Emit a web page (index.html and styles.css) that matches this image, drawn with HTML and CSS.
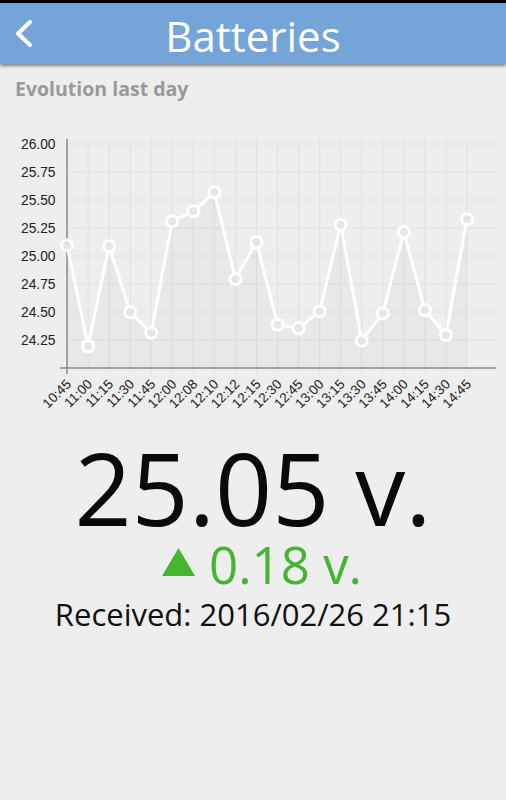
FILE: index.html
```html
<!DOCTYPE html>
<html>
<head>
<meta charset="utf-8">
<link rel="stylesheet" href="styles.css">
</head>
<body>
<header class="topbar">
  <div class="back">
    <svg width="20" height="32" viewBox="0 0 20 32"><polyline points="15,3 3,14.5 15,26" fill="none" stroke="#fff" stroke-width="4" stroke-linecap="round" stroke-linejoin="round"/></svg>
  </div>
  <h1 class="title">Batteries</h1>
  <div></div>
</header>
<h2 class="subtitle">Evolution last day</h2>
<svg class="chart" width="506" height="319" viewBox="0 101 506 319">
  <g class="grid" stroke="#e0e0e0" stroke-width="1">
    <line x1="67" y1="144" x2="496" y2="144"/>
    <line x1="67" y1="172" x2="496" y2="172"/>
    <line x1="67" y1="200" x2="496" y2="200"/>
    <line x1="67" y1="228" x2="496" y2="228"/>
    <line x1="67" y1="256" x2="496" y2="256"/>
    <line x1="67" y1="284" x2="496" y2="284"/>
    <line x1="67" y1="312" x2="496" y2="312"/>
    <line x1="67" y1="340" x2="496" y2="340"/>
    <line x1="88.05" y1="139" x2="88.05" y2="373"/>
    <line x1="109.11" y1="139" x2="109.11" y2="373"/>
    <line x1="130.16" y1="139" x2="130.16" y2="373"/>
    <line x1="151.21" y1="139" x2="151.21" y2="373"/>
    <line x1="172.26" y1="139" x2="172.26" y2="373"/>
    <line x1="193.32" y1="139" x2="193.32" y2="373"/>
    <line x1="214.37" y1="139" x2="214.37" y2="373"/>
    <line x1="235.42" y1="139" x2="235.42" y2="373"/>
    <line x1="256.47" y1="139" x2="256.47" y2="373"/>
    <line x1="277.53" y1="139" x2="277.53" y2="373"/>
    <line x1="298.58" y1="139" x2="298.58" y2="373"/>
    <line x1="319.63" y1="139" x2="319.63" y2="373"/>
    <line x1="340.68" y1="139" x2="340.68" y2="373"/>
    <line x1="361.74" y1="139" x2="361.74" y2="373"/>
    <line x1="382.79" y1="139" x2="382.79" y2="373"/>
    <line x1="403.84" y1="139" x2="403.84" y2="373"/>
    <line x1="424.89" y1="139" x2="424.89" y2="373"/>
    <line x1="445.95" y1="139" x2="445.95" y2="373"/>
    <line x1="467" y1="139" x2="467" y2="373"/>
  </g>
  <polygon fill="rgba(0,0,0,0.025)" points="67,368 67,245.3 88.05,346.3 109.11,246.3 130.16,312.3 151.21,332.7 172.26,221.3 193.32,211.3 214.37,192.3 235.42,279 256.47,242 277.53,324.7 298.58,328.3 319.63,311.3 340.68,225 361.74,340.7 382.79,313.3 403.84,232 424.89,310.3 445.95,335 467,219.3 467,368"/>
  <g stroke="#888" stroke-width="1.5">
    <line x1="60" y1="368" x2="496" y2="368"/>
    <line x1="67" y1="139" x2="67" y2="374"/>
  </g>
  <polyline fill="none" stroke="#fff" stroke-width="3" stroke-linejoin="round" points="67,245.3 88.05,346.3 109.11,246.3 130.16,312.3 151.21,332.7 172.26,221.3 193.32,211.3 214.37,192.3 235.42,279 256.47,242 277.53,324.7 298.58,328.3 319.63,311.3 340.68,225 361.74,340.7 382.79,313.3 403.84,232 424.89,310.3 445.95,335 467,219.3"/>
  <g fill="rgba(228,228,228,0.9)" stroke="#fff" stroke-width="3">
    <circle cx="67" cy="245.3" r="5.5"/>
    <circle cx="88.05" cy="346.3" r="5.5"/>
    <circle cx="109.11" cy="246.3" r="5.5"/>
    <circle cx="130.16" cy="312.3" r="5.5"/>
    <circle cx="151.21" cy="332.7" r="5.5"/>
    <circle cx="172.26" cy="221.3" r="5.5"/>
    <circle cx="193.32" cy="211.3" r="5.5"/>
    <circle cx="214.37" cy="192.3" r="5.5"/>
    <circle cx="235.42" cy="279" r="5.5"/>
    <circle cx="256.47" cy="242" r="5.5"/>
    <circle cx="277.53" cy="324.7" r="5.5"/>
    <circle cx="298.58" cy="328.3" r="5.5"/>
    <circle cx="319.63" cy="311.3" r="5.5"/>
    <circle cx="340.68" cy="225" r="5.5"/>
    <circle cx="361.74" cy="340.7" r="5.5"/>
    <circle cx="382.79" cy="313.3" r="5.5"/>
    <circle cx="403.84" cy="232" r="5.5"/>
    <circle cx="424.89" cy="310.3" r="5.5"/>
    <circle cx="445.95" cy="335" r="5.5"/>
    <circle cx="467" cy="219.3" r="5.5"/>
  </g>
  <g class="ylabels" text-anchor="end">
    <text x="55.5" y="149">26.00</text>
    <text x="55.5" y="177">25.75</text>
    <text x="55.5" y="205">25.50</text>
    <text x="55.5" y="233">25.25</text>
    <text x="55.5" y="261">25.00</text>
    <text x="55.5" y="289">24.75</text>
    <text x="55.5" y="317">24.50</text>
    <text x="55.5" y="345">24.25</text>
  </g>
  <g class="xlabels" text-anchor="end">
    <text transform="translate(72,385) rotate(-45)">10:45</text>
    <text transform="translate(93.05,385) rotate(-45)">11:00</text>
    <text transform="translate(114.11,385) rotate(-45)">11:15</text>
    <text transform="translate(135.16,385) rotate(-45)">11:30</text>
    <text transform="translate(156.21,385) rotate(-45)">11:45</text>
    <text transform="translate(177.26,385) rotate(-45)">12:00</text>
    <text transform="translate(198.32,385) rotate(-45)">12:08</text>
    <text transform="translate(219.37,385) rotate(-45)">12:10</text>
    <text transform="translate(240.42,385) rotate(-45)">12:12</text>
    <text transform="translate(261.47,385) rotate(-45)">12:15</text>
    <text transform="translate(282.53,385) rotate(-45)">12:30</text>
    <text transform="translate(303.58,385) rotate(-45)">12:45</text>
    <text transform="translate(324.63,385) rotate(-45)">13:00</text>
    <text transform="translate(345.68,385) rotate(-45)">13:15</text>
    <text transform="translate(366.74,385) rotate(-45)">13:30</text>
    <text transform="translate(387.79,385) rotate(-45)">13:45</text>
    <text transform="translate(408.84,385) rotate(-45)">14:00</text>
    <text transform="translate(429.89,385) rotate(-45)">14:15</text>
    <text transform="translate(450.95,385) rotate(-45)">14:30</text>
    <text transform="translate(472,385) rotate(-45)">14:45</text>
  </g>
</svg>
<section class="reading">
  <div class="value">25.05 v.</div>
  <div class="delta"><svg class="arrow" width="33" height="28" viewBox="0 0 33 28"><polygon points="16.5,0 33,28 0,28" fill="#44b52f"/></svg><span>0.18 v.</span></div>
  <div class="received">Received: 2016/02/26 21:15</div>
</section>
</body>
</html>
```
FILE: styles.css
```css
html, body {
  margin: 0;
  padding: 0;
  background: #eeeeee;
  font-family: "Open Sans", "Noto Sans", sans-serif;
}
.topbar {
  border-top: 3px solid #000;
  height: 61px;
  background: #74a4d8;
  box-shadow: 0 2px 3px rgba(0, 0, 0, 0.45);
  display: grid;
  grid-template-columns: 1fr auto 1fr;
  align-items: center;
}
.back {
  padding-left: 15px;
  display: flex;
  align-items: center;
}
.back svg {
  display: block;
  margin-top: 1px;
}
.title {
  margin: 0;
  font-weight: 400;
  font-size: 42px;
  line-height: 61px;
  padding-top: 2px;
  color: #fff;
}
.subtitle {
  margin: 13px 0 0 15px;
  font-size: 19.5px;
  line-height: 24px;
  font-weight: 700;
  color: #999;
}
.chart {
  display: block;
}
.ylabels text {
  font-family: "Liberation Sans", Arial, sans-serif;
  font-size: 13.8px;
  fill: #222;
}
.xlabels text {
  font-family: "Liberation Sans", Arial, sans-serif;
  font-size: 13.5px;
  fill: #222;
}
.reading {
  margin-top: 17px;
  text-align: center;
}
.value {
  font-size: 100px;
  line-height: 100px;
  color: #0a0a0a;
}
.delta {
  margin-top: 2px;
  font-size: 51px;
  line-height: 51px;
  color: #44b52f;
  padding-left: 18px;
}
.arrow {
  vertical-align: 8px;
  margin-right: 14px;
}
.received {
  margin-top: 6px;
  font-size: 31px;
  line-height: 36px;
  color: #111;
}
```
